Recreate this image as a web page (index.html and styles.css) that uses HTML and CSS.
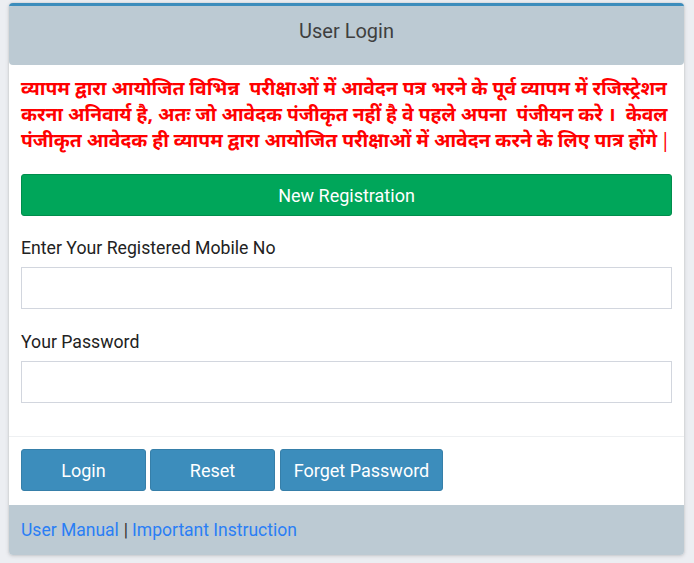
FILE: index.html
```html
<!DOCTYPE html>
<html lang="hi">
<head>
<meta charset="utf-8">
<title>User Login</title>
<link rel="stylesheet" href="styles.css">
</head>
<body>
<div class="card">
  <div class="card-header">User Login</div>
  <div class="card-body">
    <p class="notice">व्यापम द्वारा आयोजित विभिन्न&nbsp; परीक्षाओं में आवेदन पत्र भरने के पूर्व व्यापम में रजिस्ट्रेशन करना अनिवार्य है, अतः जो आवेदक पंजीकृत नहीं है वे पहले अपना&nbsp; पंजीयन करे ।&nbsp; केवल पंजीकृत आवेदक ही व्यापम द्वारा आयोजित परीक्षाओं में आवेदन करने के लिए पात्र होंगे<span class="bar">|</span></p>
    <button class="btn btn-success" type="button">New Registration</button>
    <div class="form-group">
      <label class="label" for="mobile">Enter Your Registered Mobile No</label>
      <input class="input" id="mobile" type="text">
    </div>
    <div class="form-group form-group-2">
      <label class="label" for="pwd">Your Password</label>
      <input class="input" id="pwd" type="password">
    </div>
  </div>
  <div class="card-actions">
    <button class="btn btn-primary btn-login" type="button">Login</button>
    <button class="btn btn-primary btn-reset" type="button">Reset</button>
    <button class="btn btn-primary btn-forget" type="button">Forget Password</button>
  </div>
  <div class="card-footer">
    <a href="#" class="link">User Manual</a><span class="sep">|</span><a href="#" class="link">Important Instruction</a>
  </div>
</div>
</body>
</html>
```
FILE: styles.css
```css
html, body {
  margin: 0;
  padding: 0;
}
body {
  background: #eceef2;
  font-family: Roboto, "Noto Sans", "Liberation Sans", sans-serif;
  padding: 3px 10px 8px 9px;
}
.card {
  width: 675px;
  background: #fff;
  border-top: 3px solid #3c8dbc;
  border-radius: 4px;
  box-shadow: 0 0 2px rgba(0,0,0,0.12), 0 1px 4px rgba(0,0,0,0.15);
  overflow: hidden;
}
.card-header {
  background: #bccad3;
  box-sizing: border-box;
  height: 59px;
  padding-top: 12px;
  line-height: 26px;
  text-align: center;
  font-size: 20px;
  color: #3f3f3f;
  border-radius: 0 0 4px 4px;
}
.card-body {
  padding: 10px 12px 33px;
  border-bottom: 1px solid #eef0f2;
}
.notice {
  margin: 0 0 21px;
  color: #ff0000;
  font-size: 19.3px;
  font-weight: bold;
  line-height: 26px;
  font-family: "Noto Sans", "Noto Sans Devanagari", "Lohit Devanagari", sans-serif;
}
.bar {
  font-weight: normal;
  margin-left: 3px;
}
.btn {
  font-family: Roboto, "Liberation Sans", sans-serif;
  font-size: 18px;
  color: #fff;
  border-radius: 3px;
  cursor: pointer;
  padding: 0;
  height: 42px;
}
.btn-success {
  display: block;
  width: 100%;
  background: #00a65a;
  border: 1px solid #008d4c;
}
.form-group {
  margin-top: 20px;
}
.form-group-2 {
  margin-top: 21px;
}
.label {
  display: block;
  font-size: 17.7px;
  line-height: 24px;
  color: #222;
  margin-bottom: 7px;
}
.input {
  display: block;
  box-sizing: border-box;
  width: 100%;
  height: 42px;
  border: 1px solid #d2d6de;
  border-radius: 0;
  padding: 6px 12px;
  font-size: 16px;
}
.card-actions {
  display: flex;
  padding: 12px 12px 14px;
}
.btn-primary {
  background: #3c8dbc;
  border: 1px solid #367fa9;
}
.btn-login { width: 125px; margin-right: 4px; }
.btn-reset { width: 125px; margin-right: 5px; }
.btn-forget { width: 163px; }
.card-footer {
  background: #bccad3;
  height: 50px;
  display: flex;
  align-items: center;
  padding: 0 12px;
  font-size: 17.5px;
  color: #333;
}
.link {
  color: #2a7ef5;
  text-decoration: none;
}
.sep {
  color: #333;
  margin: 0 4px 0 5px;
}
```
